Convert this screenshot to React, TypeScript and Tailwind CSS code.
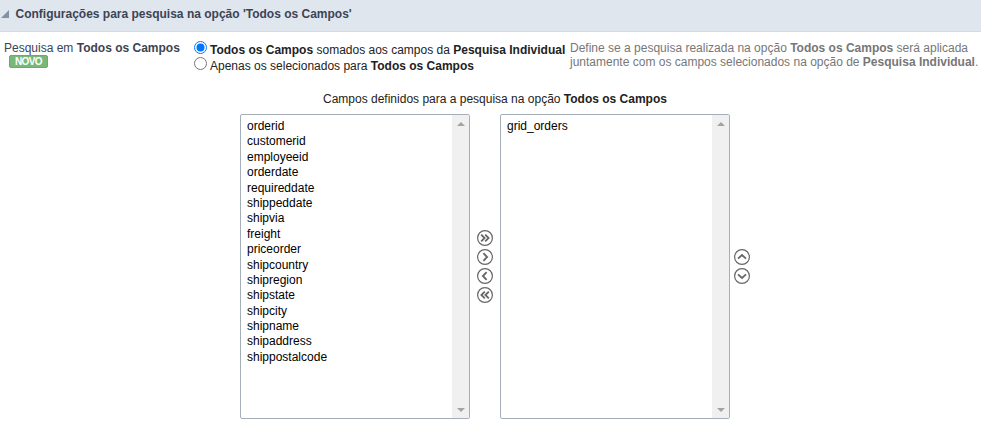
import React from "react";

const fields = [
  "orderid", "customerid", "employeeid", "orderdate", "requireddate", "shippeddate",
  "shipvia", "freight", "priceorder", "shipcountry", "shipregion", "shipstate",
  "shipcity", "shipname", "shipaddress", "shippostalcode",
];

function ListBox({ items }: { items: string[] }) {
  return (
    <div className="flex h-[305px] w-[230px] shrink-0 justify-between rounded-[2px] border border-[#a5afbc] bg-white">
      <ul className="pl-1.5 pt-[3px] text-black">
        {items.map((item) => (
          <li key={item} className="h-[15.4px] leading-[16px]">{item}</li>
        ))}
      </ul>
      <div className="flex w-[17px] flex-col items-center justify-between bg-[#f0f0f0] pb-[6px] pt-[7px]">
        <svg width="8" height="4" viewBox="0 0 8 4" className="block"><path d="M0 4 4 0 8 4Z" fill="#a3a3a3" /></svg>
        <svg width="8" height="4" viewBox="0 0 8 4" className="block"><path d="M0 0 4 4 8 0Z" fill="#a3a3a3" /></svg>
      </div>
    </div>
  );
}

function RoundButton({ d, label }: { d: string; label: string }) {
  return (
    <button aria-label={label} className="block h-4 w-4">
      <svg width="16" height="16" viewBox="0 0 16 16" fill="none" stroke="#666" className="block">
        <circle cx="8" cy="8" r="7.4" strokeWidth="1.2" />
        <path d={d} strokeWidth="1.8" />
      </svg>
    </button>
  );
}

function Radio({ checked = false }: { checked?: boolean }) {
  return (
    <svg width="13" height="13" viewBox="0 0 13 13" className="block shrink-0">
      <circle cx="6.5" cy="6.5" r="6" fill="#fff" stroke={checked ? "#0075ff" : "#767676"} />
      {checked && <circle cx="6.5" cy="6.5" r="4" fill="#0075ff" />}
    </svg>
  );
}

export default function App() {
  return (
    <div className="h-[422px] w-[981px] overflow-hidden bg-white font-['Liberation_Sans',Arial,sans-serif] text-[12px] leading-[14px] text-[#222] whitespace-nowrap">
      <header className="flex h-8 items-center border-b border-[#d3dce6] bg-[#dfe6ee] pb-[3px] pl-[1px] font-bold text-[#3c4454]">
        <svg width="8" height="8" viewBox="0 0 8 8" className="mr-[6.5px] block"><path d="M8 0V8H0Z" fill="#8291a5" /></svg>
        <span>Configurações para pesquisa na opção 'Todos os Campos'</span>
      </header>
      <section className="flex h-[60px] pt-[9px]">
        <div className="w-[190px] pl-1 text-[#3c4454]">
          <p>Pesquisa em <b>Todos os Campos</b></p>
          <span className="ml-[5px] flex h-[13px] w-[39px] items-center justify-center rounded-[2px] border border-[#6aaa6a] bg-[#78b878] text-[10px] font-bold leading-[11px] tracking-[-0.6px] text-white">NOVO</span>
        </div>
        <div className="w-[380px] pl-1">
          <div className="flex h-4 gap-[3px]"><Radio checked /><span className="pt-[2px]"><b>Todos os Campos</b> somados aos campos da <b>Pesquisa Individual</b></span></div>
          <div className="flex h-4 gap-[3px]"><Radio /><span className="pt-[2px]">Apenas os selecionados para <b>Todos os Campos</b></span></div>
        </div>
        <div className="text-[#777]">
          <p>Define se a pesquisa realizada na opção <b>Todos os Campos</b> será aplicada</p>
          <p>juntamente com os campos selecionados na opção de <b>Pesquisa Individual</b>.</p>
        </div>
      </section>
      <p className="h-[22px] pl-[323px]">Campos definidos para a pesquisa na opção <b>Todos os Campos</b></p>
      <main className="flex pl-[240px]">
        <ListBox items={fields} />
        <div className="flex w-[30px] flex-col items-center gap-[3px] pt-[116px]">
          <RoundButton label="Adicionar todos" d="M4.2 4.6 7.6 8 4.2 11.4M8.2 4.6 11.6 8 8.2 11.4" />
          <RoundButton label="Adicionar" d="M6.4 4.2 10.1 8 6.4 11.8" />
          <RoundButton label="Remover" d="M9.6 4.2 5.9 8 9.6 11.8" />
          <RoundButton label="Remover todos" d="M7.8 4.6 4.4 8 7.8 11.4M11.8 4.6 8.4 8 11.8 11.4" />
        </div>
        <ListBox items={["grid_orders"]} />
        <div className="flex flex-col gap-[3px] pl-1 pt-[135px]">
          <RoundButton label="Mover para cima" d="M4 9.7 8 6 12 9.7" />
          <RoundButton label="Mover para baixo" d="M4 6.3 8 10 12 6.3" />
        </div>
      </main>
    </div>
  );
}
